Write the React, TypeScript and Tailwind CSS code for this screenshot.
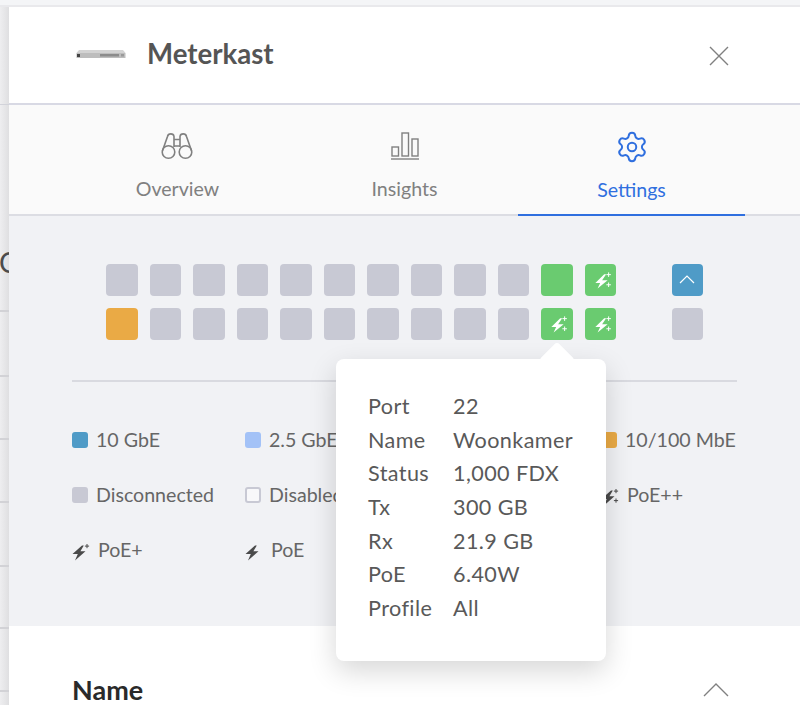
import React from "react";
import { Settings } from "lucide-react";

const PortBolt = () => (
  <svg viewBox="0 0 32 32" className="h-full w-full" fill="#fff">
    <polygon points="19.5,10.5 10.5,19.2 15.4,19.2 12.8,25 23,16.4 17.4,16.4 21.5,10.5" />
    <path d="M24 8.5v4.6M21.7 10.8h4.6M24 18.8v4.6M21.7 21.1h4.6" stroke="#fff" strokeWidth="1" fill="none" />
  </svg>
);

const Port = ({ color = "bg-[#c8c9d4]", bolt = false }: { color?: string; bolt?: boolean }) => (
  <div className={`h-[31.5px] w-[31.5px] rounded-[4px] ${color}`}>{bolt && <PortBolt />}</div>
);

const LegendBolt = ({ plus = 0 }: { plus?: number }) => (
  <svg viewBox="0 0 18 18" className="mt-[3px] h-[18px] w-[18px]" fill="#4a4a4a">
    <polygon points="10,2.5 0.5,11 5.8,11 3,17.5 13.5,8.2 8.4,8.2 11.8,2.5" />
    {plus > 0 && <path d="M15 1v4.2M12.9 3.1h4.2" stroke="#4a4a4a" strokeWidth="1" fill="none" />}
    {plus > 1 && <path d="M15 10.5v4.2M12.9 12.6h4.2" stroke="#4a4a4a" strokeWidth="1" fill="none" />}
  </svg>
);

const Swatch = ({ className }: { className: string }) => (
  <span className={`block h-[16px] w-[16px] rounded-[3px] ${className}`} />
);

const Legend = ({ icon, label, gap = "gap-[8px]" }: { icon: React.ReactNode; label: string; gap?: string }) => (
  <div className={`flex h-[24px] items-center ${gap} whitespace-nowrap`}>
    {icon}
    <span>{label}</span>
  </div>
);

const tooltipRows = [
  ["Port", "22"],
  ["Name", "Woonkamer"],
  ["Status", "1,000 FDX"],
  ["Tx", "300 GB"],
  ["Rx", "21.9 GB"],
  ["PoE", "6.40W"],
  ["Profile", "All"],
];

const sideLines = ["h-[207px]", "h-[65px]", "h-[63px]", "h-[63px]", "h-[64px]", "h-[62px]", "h-[63px]"];

export default function App() {
  return (
    <div className="h-[705px] w-[800px] overflow-hidden bg-[#f4f5f7] font-['Lato',sans-serif]">
      <div className="h-[7px] border-b-2 border-[#e9e9ec]" />
      <div className="flex h-[698px]">
        {/* page behind the panel */}
        <div className="w-[9px] shrink-0 overflow-hidden bg-linear-to-r from-[#eeeef0] to-[#dfdfe1]">
          <div className="h-[98px] border-b border-[#d2d3da]" />
          <div className="relative">
            <span className="absolute top-[140px] left-[-1px] text-[28px] leading-[34px] text-[#4c4c4c]">C</span>
            {sideLines.map((h, i) => (
              <div key={i} className={`${h} border-b-2 border-[#d2d2d6]`} />
            ))}
          </div>
        </div>

        <div className="min-w-0 flex-1 bg-white">
          {/* header */}
          <div className="flex h-[98px] items-center justify-between border-b-2 border-[#d8d9e4] pr-[71px] pl-[67px]">
            <div className="flex items-center gap-[21px]">
              <svg width="50" height="12" viewBox="0 0 50 12">
                <polygon points="3,1 47,1 49.5,4 0.5,4" fill="#d3d3d3" />
                <rect x="0.5" y="4" width="49" height="5" fill="#bdbdbd" />
                <rect x="1" y="5" width="3" height="3" fill="#444" />
                <rect x="24" y="5" width="19" height="2.5" fill="#8c8c8c" />
                <rect x="45" y="5" width="3" height="2.5" fill="#9a9a9a" />
              </svg>
              <h1 className="mb-[2px] text-[27.6px] leading-none font-bold text-[#555555]">Meterkast</h1>
            </div>
            <svg className="mt-[2px]" width="20" height="20" viewBox="0 0 20 20" fill="none" stroke="#808080" strokeWidth="1.4">
              <path d="M1 1l18 18M19 1L1 19" />
            </svg>
          </div>

          {/* tabs */}
          <div className="flex h-[111px] border-b-2 border-[#dcdde3] bg-[#fafafa] pl-[55px] text-[19.6px] text-[#808080]">
            <div className="flex h-[111px] w-[227px] flex-col items-center pt-[27px]">
              <svg className="-ml-[2px]" width="32" height="28" viewBox="0 0 32 28" fill="none" stroke="#808080" strokeWidth="1.6">
                <circle cx="7.5" cy="20" r="6.3" />
                <circle cx="24.5" cy="20" r="6.3" />
                <path d="M1.4 19L6.5 4.5C7.2 1 12.5 1 13 4.5V15M30.6 19L25.5 4.5C24.8 1 19.5 1 19 4.5V15M13 7.5h6M13 14h6" />
              </svg>
              <span className="mt-[16px] leading-[26px]">Overview</span>
            </div>
            <div className="flex h-[111px] w-[227px] flex-col items-center pt-[27px]">
              <svg width="30" height="28" viewBox="0 0 30 28" fill="none" stroke="#808080" strokeWidth="1.4">
                <rect x="2" y="15" width="6.5" height="9" />
                <rect x="12" y="1" width="6.5" height="23" />
                <rect x="22" y="7" width="6" height="17" />
                <path d="M1 27h28" />
              </svg>
              <span className="mt-[16px] leading-[26px]">Insights</span>
            </div>
            <div className="flex h-[111px] w-[227px] flex-col items-center border-b-2 border-[#2f6fdf] pt-[25px] text-[#2f6fdf]">
              <Settings size={34} strokeWidth={1.4} />
              <span className="mt-[13px] leading-[26px]">Settings</span>
            </div>
          </div>

          {/* ports and legend */}
          <div className="relative h-[410px] bg-[#f1f2f5] px-[63px] pt-[48px] text-[19.6px] text-[#666666]">
            <div className="flex flex-col gap-[12.5px] pl-[34px]">
              <div className="flex">
                <div className="flex gap-[12px]">
                  {Array.from({ length: 10 }).map((_, i) => (
                    <Port key={i} />
                  ))}
                  <Port color="bg-[#6acb70]" />
                  <Port color="bg-[#6acb70]" bolt />
                </div>
                <div className="ml-[55.5px] flex h-[31.5px] w-[31.5px] items-center justify-center rounded-[4px] bg-[#4f9bc7]">
                  <svg width="16" height="9" viewBox="0 0 16 9" fill="none" stroke="#fff" strokeWidth="1.2">
                    <path d="M1 8l7-7 7 7" />
                  </svg>
                </div>
              </div>
              <div className="flex">
                <div className="flex gap-[12px]">
                  <Port color="bg-[#eaaa45]" />
                  {Array.from({ length: 9 }).map((_, i) => (
                    <Port key={i} />
                  ))}
                  <Port color="bg-[#6acb70]" bolt />
                  <Port color="bg-[#6acb70]" bolt />
                </div>
                <div className="ml-[55.5px]">
                  <Port />
                </div>
              </div>
            </div>

            <div className="mt-[40px] h-[2px] w-[665px] bg-[#d9dae0]" />

            <div className="mt-[46.5px] grid grid-cols-[173px_172px_184px_auto] gap-y-[31px]">
              <Legend icon={<Swatch className="bg-[#4f9bc7]" />} label="10 GbE" />
              <Legend icon={<Swatch className="bg-[#a3c2f7]" />} label="2.5 GbE" />
              <div />
              <Legend icon={<Swatch className="bg-[#eaaa45]" />} label="10/100 MbE" />
              <Legend icon={<Swatch className="bg-[#c8c9d4]" />} label="Disconnected" />
              <Legend icon={<Swatch className="border-2 border-[#c8c9d4] bg-[#f8f8fa]" />} label="Disabled" />
              <div />
              <Legend icon={<LegendBolt plus={2} />} label="PoE++" />
              <Legend icon={<LegendBolt plus={1} />} label="PoE+" />
              <Legend icon={<LegendBolt />} label="PoE" />
            </div>

            {/* port tooltip */}
            <div className="absolute top-[143px] left-[327px] h-[302px] w-[270px] rounded-[8px] bg-white pt-[30.6px] pl-[32px] text-[21.6px] tracking-[0.4px] text-[#595959] shadow-[0_10px_28px_rgba(0,0,0,0.16)]">
              <div className="absolute top-[-12px] left-[208px] h-[26px] w-[26px] rotate-45 rounded-[4px] bg-white" />
              <div className="relative">
                {tooltipRows.map(([label, value]) => (
                  <div key={label} className="flex h-[33.6px] items-center">
                    <span className="w-[85px]">{label}</span>
                    <span>{value}</span>
                  </div>
                ))}
              </div>
            </div>
          </div>

          {/* name section */}
          <div className="flex items-center justify-between pt-[49px] pr-[71px] pl-[63px]">
            <h2 className="text-[27px] leading-[30px] font-bold text-[#2a2a2a]">Name</h2>
            <svg width="26" height="14" viewBox="0 0 26 14" fill="none" stroke="#808080" strokeWidth="1.4">
              <path d="M1 13L13 1l12 12" />
            </svg>
          </div>
        </div>
      </div>
    </div>
  );
}
